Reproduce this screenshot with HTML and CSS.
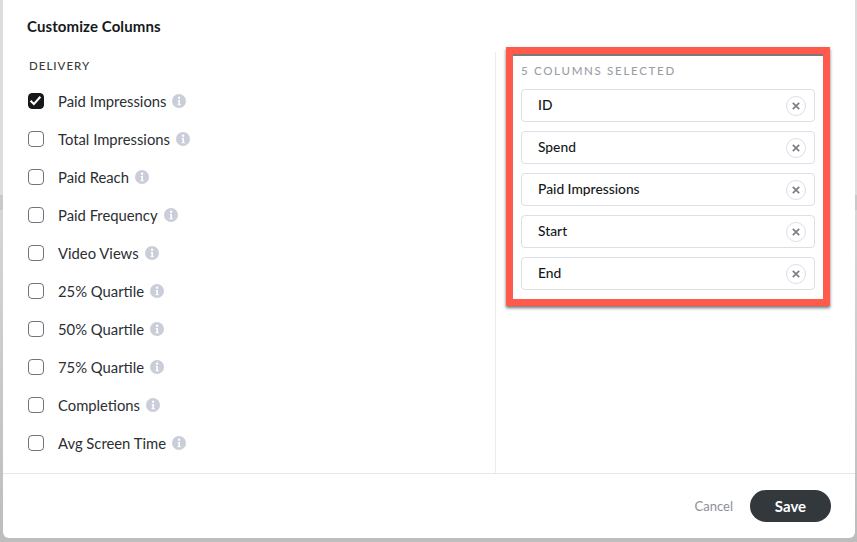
FILE: index.html
```html
<!DOCTYPE html>
<html lang="en">
<head>
<meta charset="utf-8">
<title>Customize Columns</title>
<link rel="stylesheet" href="styles.css">
</head>
<body>
<svg class="defs" width="0" height="0" aria-hidden="true">
  <symbol id="info" viewBox="0 0 14 14">
    <circle cx="7" cy="7" r="7" fill="#c9ced9"/>
    <circle cx="7.1" cy="3.7" r="1.2" fill="#fff"/>
    <path d="M5.7 6h2.3v4.3h.8v1H5.5v-1h.9V7h-.7z" fill="#fff"/>
  </symbol>
  <symbol id="close" viewBox="0 0 20 20">
    <circle cx="10" cy="10" r="9.5" fill="#fff" stroke="#dcdee2"/>
    <path d="M6.8 6.8l6.4 6.4M13.2 6.8l-6.4 6.4" stroke="#7b7e86" stroke-width="1.7" fill="none"/>
  </symbol>
</svg>
<main class="modal">
  <header class="modal-header"><h1 class="title">Customize Columns</h1></header>
  <div class="modal-body">
    <section class="options">
      <h2 class="group-title">DELIVERY</h2>
      <ul class="option-list">
        <li class="option"><span class="checkbox checked"><svg class="tick" viewBox="2 2 12 12"><path d="M3.4 8.2l3.1 3.1 6-6.8" fill="none" stroke="#fff" stroke-width="1.9"/></svg></span><span class="option-label">Paid Impressions</span><svg class="info"><use href="#info"/></svg></li>
        <li class="option"><span class="checkbox"></span><span class="option-label">Total Impressions</span><svg class="info"><use href="#info"/></svg></li>
        <li class="option"><span class="checkbox"></span><span class="option-label">Paid Reach</span><svg class="info"><use href="#info"/></svg></li>
        <li class="option"><span class="checkbox"></span><span class="option-label">Paid Frequency</span><svg class="info"><use href="#info"/></svg></li>
        <li class="option"><span class="checkbox"></span><span class="option-label">Video Views</span><svg class="info"><use href="#info"/></svg></li>
        <li class="option"><span class="checkbox"></span><span class="option-label">25% Quartile</span><svg class="info"><use href="#info"/></svg></li>
        <li class="option"><span class="checkbox"></span><span class="option-label">50% Quartile</span><svg class="info"><use href="#info"/></svg></li>
        <li class="option"><span class="checkbox"></span><span class="option-label">75% Quartile</span><svg class="info"><use href="#info"/></svg></li>
        <li class="option"><span class="checkbox"></span><span class="option-label">Completions</span><svg class="info"><use href="#info"/></svg></li>
        <li class="option"><span class="checkbox"></span><span class="option-label">Avg Screen Time</span><svg class="info"><use href="#info"/></svg></li>
      </ul>
    </section>
    <aside class="selected">
      <div class="highlight">
        <h2 class="selected-title">5 COLUMNS SELECTED</h2>
        <ul class="selected-list">
          <li class="chip"><span class="chip-label">ID</span><svg class="remove"><use href="#close"/></svg></li>
          <li class="chip"><span class="chip-label">Spend</span><svg class="remove"><use href="#close"/></svg></li>
          <li class="chip"><span class="chip-label">Paid Impressions</span><svg class="remove"><use href="#close"/></svg></li>
          <li class="chip"><span class="chip-label">Start</span><svg class="remove"><use href="#close"/></svg></li>
          <li class="chip"><span class="chip-label">End</span><svg class="remove"><use href="#close"/></svg></li>
        </ul>
      </div>
    </aside>
  </div>
  <footer class="modal-footer">
    <button class="btn-cancel">Cancel</button>
    <button class="btn-save">Save</button>
  </footer>
</main>
</body>
</html>
```
FILE: styles.css
```css
* { box-sizing: border-box; }
html, body { margin: 0; padding: 0; }
body {
  width: 857px;
  height: 542px;
  overflow: hidden;
  padding: 0 2px 4px 3px;
  background: linear-gradient(to bottom, #dcdcdc 0, #dcdcdc 195px, #c9c9c9 195px, #c9c9c9 210px, #d6d6d6 210px, #bdbdbd 542px);
  font-family: Lato, "Open Sans", sans-serif;
  color: #1f2124;
}
.defs { position: absolute; }
.modal {
  height: 538px;
  background: #fff;
  border-radius: 0 0 6px 6px;
  display: flex;
  flex-direction: column;
}
.modal-header { height: 52px; padding: 17px 0 0 24px; flex: none; }
.title { margin: 0; font-size: 15px; line-height: 18px; font-weight: 700; letter-spacing: .1px; color: #16191c; }
.modal-body { flex: 1; display: flex; min-height: 0; }
.options { width: 493px; border-right: 1px solid #ececee; padding: 7px 0 0 25px; flex: none; }
.group-title { margin: 0; padding-left: 1px; font-size: 11.5px; line-height: 14px; font-weight: 500; letter-spacing: 1px; color: #3a3d42; }
.option-list, .selected-list { list-style: none; margin: 0; padding: 0; }
.option-list { margin-top: 9px; }
.option { height: 38px; display: flex; align-items: center; }
.checkbox {
  width: 16px; height: 16px; border: 1.5px solid #70747d; border-radius: 4px;
  background: #fff; flex: none; display: flex;
}
.checkbox.checked { background: #16191c; border-color: #16191c; }
.tick { width: 13px; height: 13px; }
.option-label { margin-left: 14px; padding-bottom: 1px; font-size: 14.8px; line-height: 18px; color: #2b2e33; }
.info { width: 14px; height: 14px; margin-left: 6px; flex: none; }
.selected { flex: 1; padding: 0 0 0 10px; margin-top: -5px; }
.highlight {
  width: 324px;
  height: 259px;
  border: 7.5px solid #ff5a4b;
  border-top-width: 7px;
  padding: 10px 8px 0;
  background: #fff;
  box-shadow: 0 2px 3px rgba(0,0,0,.55), inset 0 2px 0 #7a7a7a;
}
.selected-title { margin: 0 0 11px; font-size: 11.5px; line-height: 14px; font-weight: 500; letter-spacing: 1.7px; color: #9b9ea6; }
.selected-list { display: flex; flex-direction: column; gap: 9px; }
.chip {
  height: 33px;
  border: 1px solid #dddfe8;
  border-radius: 4px;
  padding: 0 8px 0 16px;
  display: flex;
  align-items: center;
  justify-content: space-between;
}
.chip-label { padding-bottom: 1px; font-size: 13.8px; line-height: 18px; font-weight: 500; color: #16191c; }
.remove { width: 20px; height: 20px; flex: none; }
.modal-footer {
  height: 65px;
  flex: none;
  border-top: 1px solid #e6e6e8;
  display: flex;
  align-items: center;
  justify-content: flex-end;
  padding: 0 24px 1px 0;
  gap: 17px;
}
.btn-cancel { border: 0; background: none; padding: 0; font: 400 13px/16px Lato, sans-serif; color: #8d9096; }
.btn-save {
  width: 81px; height: 32px; border: 0; border-radius: 16px; background: #33383c;
  color: #fff; font: 700 15px/18px Lato, sans-serif;
}
```
